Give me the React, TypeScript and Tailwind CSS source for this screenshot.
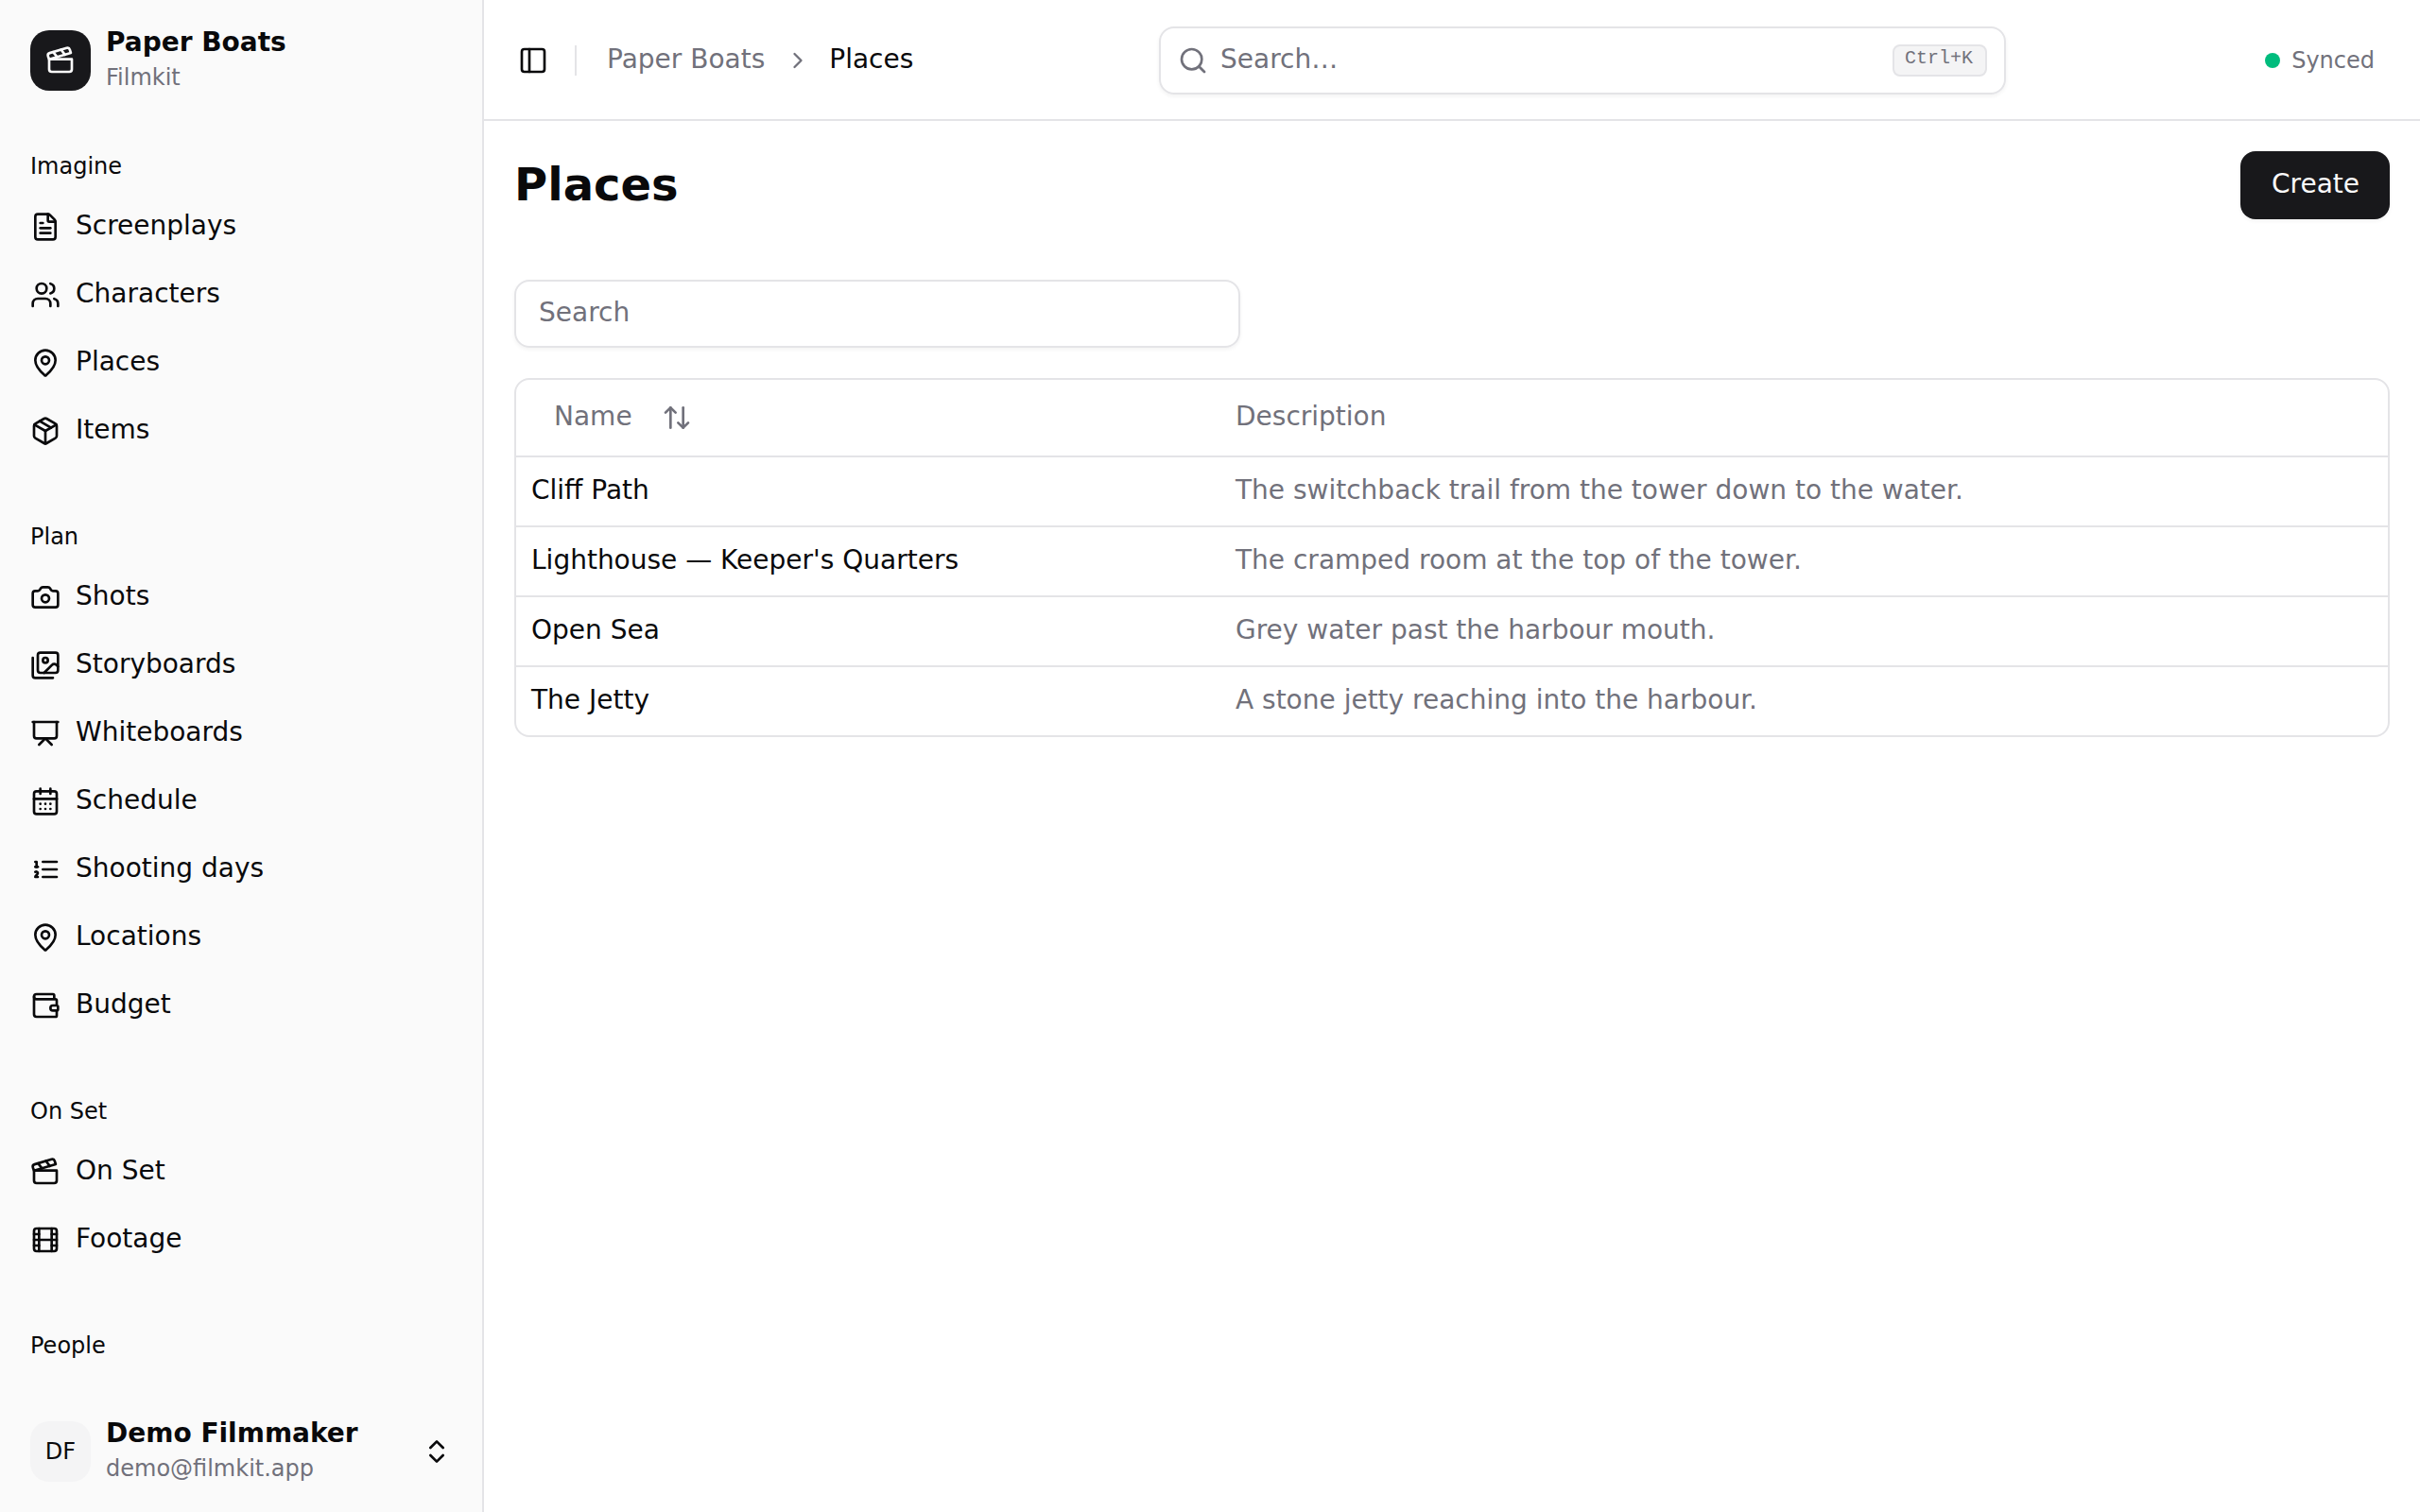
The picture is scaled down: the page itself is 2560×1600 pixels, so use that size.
import type { ComponentType, ReactNode } from 'react';
import {
  ArrowUpDown,
  CalendarDays,
  Camera,
  ChevronRight,
  ChevronsUpDown,
  Clapperboard,
  FileText,
  Film,
  MapPin,
  Package,
  PanelLeft,
  Presentation,
  Search,
  Users,
  Wallet,
} from 'lucide-react';

type IconProps = { className?: string };
type NavItem = { label: string; icon: ComponentType<IconProps> };
type NavGroup = { title: string; items: NavItem[] };

function StrokeIcon({ className, children }: IconProps & { children: ReactNode }) {
  return (
    <svg
      viewBox="0 0 24 24"
      fill="none"
      stroke="currentColor"
      strokeWidth={2}
      strokeLinecap="round"
      strokeLinejoin="round"
      className={className}
    >
      {children}
    </svg>
  );
}

function ImagesIcon({ className }: IconProps) {
  return (
    <StrokeIcon className={className}>
      <path d="M18 22H4a2 2 0 0 1-2-2V6" />
      <path d="m22 13-1.296-1.296a2.41 2.41 0 0 0-3.408 0L11 18" />
      <circle cx="12" cy="8" r="2" />
      <rect width="16" height="16" x="6" y="2" rx="2" />
    </StrokeIcon>
  );
}

function NumberedListIcon({ className }: IconProps) {
  return (
    <StrokeIcon className={className}>
      <path d="M10 12h11" />
      <path d="M10 18h11" />
      <path d="M10 6h11" />
      <path d="M4 10h2" />
      <path d="M4 6h1v4" />
      <path d="M6 18H4c0-1 2-2 2-3s-1-1.5-2-1" />
    </StrokeIcon>
  );
}

const groups: NavGroup[] = [
  {
    title: 'Imagine',
    items: [
      { label: 'Screenplays', icon: FileText },
      { label: 'Characters', icon: Users },
      { label: 'Places', icon: MapPin },
      { label: 'Items', icon: Package },
    ],
  },
  {
    title: 'Plan',
    items: [
      { label: 'Shots', icon: Camera },
      { label: 'Storyboards', icon: ImagesIcon },
      { label: 'Whiteboards', icon: Presentation },
      { label: 'Schedule', icon: CalendarDays },
      { label: 'Shooting days', icon: NumberedListIcon },
      { label: 'Locations', icon: MapPin },
      { label: 'Budget', icon: Wallet },
    ],
  },
  {
    title: 'On Set',
    items: [
      { label: 'On Set', icon: Clapperboard },
      { label: 'Footage', icon: Film },
    ],
  },
  { title: 'People', items: [] },
];

const places = [
  { name: 'Cliff Path', description: 'The switchback trail from the tower down to the water.' },
  { name: "Lighthouse — Keeper's Quarters", description: 'The cramped room at the top of the tower.' },
  { name: 'Open Sea', description: 'Grey water past the harbour mouth.' },
  { name: 'The Jetty', description: 'A stone jetty reaching into the harbour.' },
];

function TitleBlock({ title, subtitle }: { title: string; subtitle: string }) {
  return (
    <div className="flex flex-1 flex-col pb-0.5">
      <span className="mb-[5px] text-[28px] leading-[33px] font-bold">{title}</span>
      <span className="text-2xl leading-8 text-zinc-500">{subtitle}</span>
    </div>
  );
}

function AppSidebar() {
  return (
    <aside className="flex h-full w-[512px] shrink-0 flex-col border-r-2 border-zinc-200 bg-[#fafafa]">
      <div className="p-4">
        <div className="flex h-24 items-center gap-4 px-4">
          <div className="flex size-16 items-center justify-center rounded-[20px] bg-zinc-900 text-zinc-50">
            <Clapperboard className="size-8" />
          </div>
          <TitleBlock title="Paper Boats" subtitle="Filmkit" />
        </div>
      </div>

      <nav className="flex min-h-0 flex-1 flex-col gap-4 overflow-hidden">
        {groups.map((group) => (
          <div key={group.title} className="flex flex-col p-4">
            <div className="flex h-16 shrink-0 items-center px-4 text-2xl leading-8">{group.title}</div>
            <ul className="flex flex-col gap-2">
              {group.items.map((item) => (
                <li key={item.label} className="flex h-16 items-center gap-4 px-4">
                  <item.icon className="size-8 shrink-0" />
                  <span className="pb-[3px]">{item.label}</span>
                </li>
              ))}
            </ul>
          </div>
        ))}
      </nav>

      <div className="p-4">
        <div className="flex h-24 items-center gap-4 px-4">
          <div className="flex size-16 items-center justify-center rounded-[20px] bg-zinc-100 text-2xl leading-8">
            DF
          </div>
          <TitleBlock title="Demo Filmmaker" subtitle="demo@filmkit.app" />
          <ChevronsUpDown className="size-8" />
        </div>
      </div>
    </aside>
  );
}

function TopBar() {
  return (
    <header className="flex h-32 shrink-0 items-center border-b-2 border-zinc-200 pt-0.5 pr-12 pl-6">
      <div className="flex w-[690px] items-center gap-4">
        <button className="flex size-14 items-center justify-center">
          <PanelLeft className="size-8" />
        </button>
        <div className="mr-4 h-8 w-0.5 bg-zinc-200" />
        <div className="flex items-center gap-5">
          <span className="pb-[3px] text-zinc-500">Paper Boats</span>
          <ChevronRight className="-mr-px ml-px size-7 text-zinc-500" />
          <span className="pb-[3px]">Places</span>
        </div>
      </div>
      <div className="flex h-[72px] w-[896px] items-center rounded-2xl border-2 border-zinc-200 px-[18px] text-zinc-500 shadow-[0_2px_4px_0_rgb(0_0_0/0.05)]">
        <Search className="size-8" />
        <span className="ml-[13px] flex-1 pb-[3px]">Search…</span>
        <kbd className="rounded-lg border-2 border-zinc-200 bg-zinc-100 pr-[13px] pb-[5px] pl-[11px] font-['Liberation_Mono',monospace] text-xl leading-[25px]">
          Ctrl+K
        </kbd>
      </div>
      <div className="ml-auto flex items-center gap-3 text-2xl leading-8 text-zinc-500">
        <span className="size-4 rounded-full bg-emerald-500" />
        Synced
      </div>
    </header>
  );
}

function PlacesTable() {
  return (
    <div className="overflow-hidden rounded-2xl border-2 border-zinc-200">
      <div className="grid h-[82px] grid-cols-[745px_1fr] items-center border-b-2 border-zinc-200 text-zinc-500">
        <div className="flex items-center gap-[31px] px-10">
          <span className="pb-[3px]">Name</span>
          <ArrowUpDown className="size-8" />
        </div>
        <div className="px-4 pb-[3px]">Description</div>
      </div>
      {places.map((place) => (
        <div
          key={place.name}
          className="grid grid-cols-[745px_1fr] border-b-2 border-zinc-200 pt-4 pb-[19px] last:border-b-0"
        >
          <div className="px-4">{place.name}</div>
          <div className="px-4 text-zinc-500">{place.description}</div>
        </div>
      ))}
    </div>
  );
}

export default function App() {
  return (
    <div className="flex h-[1600px] w-[2560px] overflow-hidden bg-white font-['DejaVu_Sans',sans-serif] text-[28px] leading-[37px] text-zinc-950">
      <AppSidebar />
      <main className="flex min-w-0 flex-1 flex-col">
        <TopBar />
        <div className="flex flex-col p-8">
          <div className="mb-16 flex h-[72px] items-center justify-between">
            <h1 className="pb-0.5 text-5xl leading-[62px] font-bold">Places</h1>
            <button className="h-[72px] w-[158px] rounded-2xl bg-zinc-900 pb-[3px] pl-px text-zinc-50 shadow-[0_2px_4px_0_rgb(0_0_0/0.05)]">
              Create
            </button>
          </div>
          <input
            type="text"
            placeholder="Search"
            className="mb-8 h-[72px] w-[768px] rounded-2xl border-2 border-zinc-200 px-6 pb-[3px] shadow-[0_2px_4px_0_rgb(0_0_0/0.05)] placeholder:text-zinc-500"
          />
          <PlacesTable />
        </div>
      </main>
    </div>
  );
}
